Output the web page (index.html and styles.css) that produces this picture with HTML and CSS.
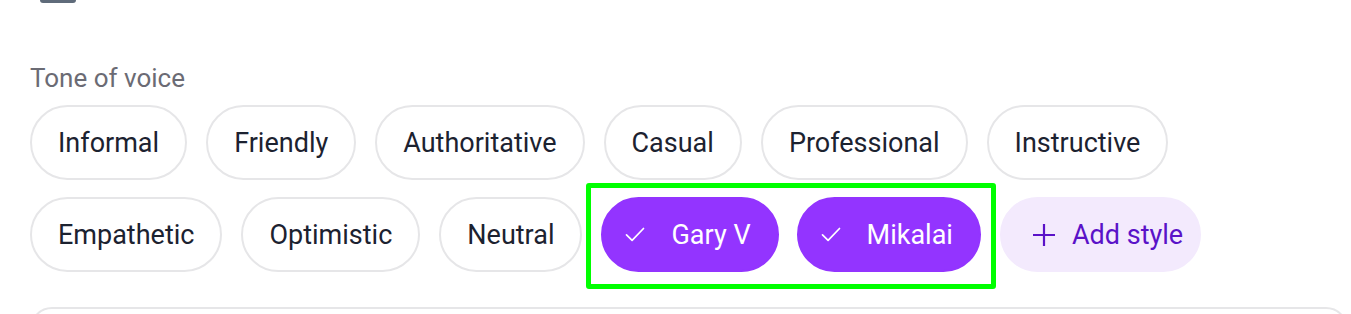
FILE: index.html
```html
<!DOCTYPE html>
<html lang="en">
<head>
<meta charset="utf-8">
<title>Tone of voice</title>
<link rel="stylesheet" href="styles.css">
</head>
<body>
<div class="page">
  <div class="top-handle"></div>
  <div class="label">Tone of voice</div>
  <div class="chips">
    <button class="chip">Informal</button>
    <button class="chip">Friendly</button>
    <button class="chip">Authoritative</button>
    <button class="chip">Casual</button>
    <button class="chip">Professional</button>
    <button class="chip">Instructive</button>
  </div>
  <div class="chips">
    <button class="chip">Empathetic</button>
    <button class="chip">Optimistic</button>
    <button class="chip">Neutral</button>
    <span class="group">
      <button class="chip selected">
        <svg class="check" viewBox="0 0 20 15" width="20" height="15" aria-hidden="true"><path d="M1.5 7.8l5.6 5.6L18.5 1.5" fill="none" stroke="currentColor" stroke-width="1.7" stroke-linecap="round" stroke-linejoin="round"/></svg>
        <span>Gary V</span>
      </button>
      <button class="chip selected">
        <svg class="check" viewBox="0 0 20 15" width="20" height="15" aria-hidden="true"><path d="M1.5 7.8l5.6 5.6L18.5 1.5" fill="none" stroke="currentColor" stroke-width="1.7" stroke-linecap="round" stroke-linejoin="round"/></svg>
        <span>Mikalai</span>
      </button>
    </span>
    <button class="chip add">
      <svg class="plus" viewBox="0 0 24 24" width="24" height="24" aria-hidden="true"><path d="M12 1v22M1 12h22" fill="none" stroke="currentColor" stroke-width="2.2"/></svg>
      <span>Add style</span>
    </button>
  </div>
  <div class="panel"></div>
</div>
</body>
</html>
```

FILE: styles.css
```css
* { box-sizing: border-box; }
html, body { margin: 0; padding: 0; background: #ffffff; }
body {
  font-family: Roboto, "Liberation Sans", Arial, sans-serif;
  overflow: hidden;
  height: 314px;
}
.page {
  padding: 0 3px 0 30px;
}
.top-handle {
  width: 36px;
  height: 3px;
  margin-left: 10px;
  background: #5f6b7a;
  border-radius: 0 0 5px 5px;
}
.label {
  margin-top: 59px;
  font-size: 26px;
  line-height: 32px;
  color: #6b6b74;
}
.chips {
  display: flex;
  gap: 19px;
  align-items: center;
}
.chips + .chips { margin-top: 17px; }
.label + .chips { margin-top: 11px; }
.chip {
  font-family: inherit;
  font-size: 27px;
  color: #1c2230;
  height: 75px;
  padding: 0 26px;
  border: 2px solid #e6e6e8;
  border-radius: 999px;
  background: #ffffff;
  display: inline-flex;
  align-items: center;
  white-space: nowrap;
}
.group {
  position: relative;
  display: inline-flex;
  gap: 18px;
}
.group::after {
  content: "";
  position: absolute;
  left: -15px;
  top: -14px;
  right: -15px;
  bottom: -17px;
  border: 5px solid #00ff00;
  border-radius: 3px;
  pointer-events: none;
}
.chip.selected {
  background: #9334ff;
  border-color: #9334ff;
  color: #ffffff;
  padding: 0 26px 0 22px;
  gap: 26px;
}
.check { display: block; }
.chip.add {
  background: #f3eafd;
  border-color: #f3eafd;
  color: #5a12c8;
  padding: 0 16px 0 30px;
  gap: 16px;
}
.plus { display: block; }
.panel {
  margin-top: 35px;
  height: 60px;
  border: 2px solid #e6e6e8;
  border-radius: 22px;
}
```
